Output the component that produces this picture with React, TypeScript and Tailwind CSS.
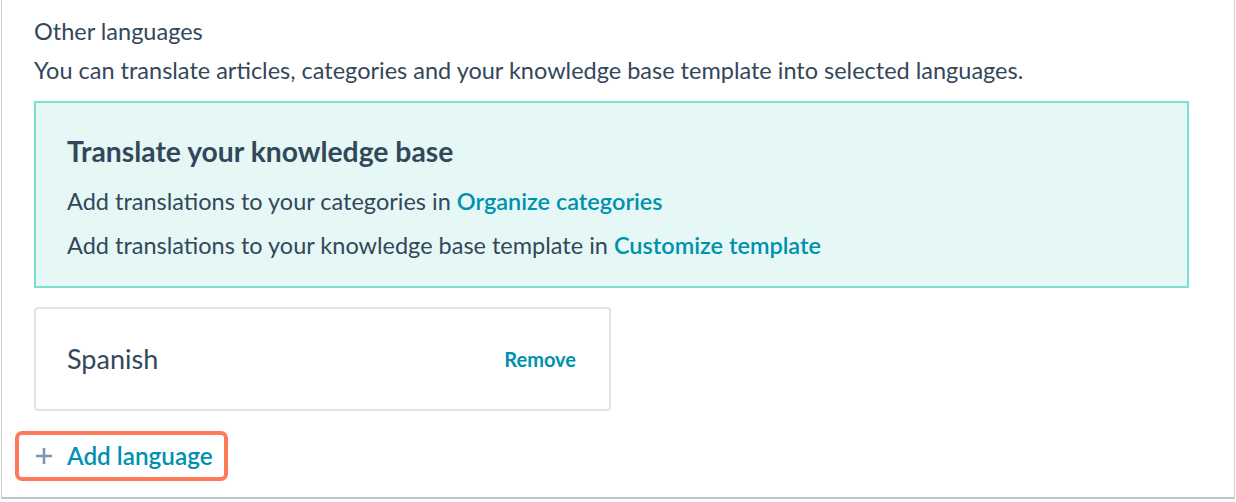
import React from "react";

const font = { fontFamily: "Lato, 'Noto Sans', sans-serif" };

function PlusIcon() {
  return (
    <svg width="18" height="18" viewBox="0 0 18 18" aria-hidden="true">
      <path d="M9 1v16M1 9h16" stroke="#7c98b6" strokeWidth="2.6" />
    </svg>
  );
}

export default function App() {
  return (
    <div className="h-[502px] w-[1236px] bg-white pl-[1px]" style={font}>
      <div className="h-[499px] w-[1234px] border-x border-b-2 border-x-[#cfcfcf] border-b-[#c4c4c4] pl-[32px] pt-[17px] text-[#33475b]">
        <div className="text-[23.5px] leading-[28px]">Other languages</div>
        <p className="mt-[11px] text-[23.5px] leading-[28px]">
          You can translate articles, categories and your knowledge base template into selected languages.
        </p>

        <div className="mt-[17px] h-[187px] w-[1155px] border-2 border-[#7fded2] bg-[#e5f8f6] pl-[31px] pt-[31px]">
          <h3 className="text-[28.3px] font-bold leading-[34px]">Translate your knowledge base</h3>
          <p className="mt-[19px] text-[23.5px] leading-[28px]">
            Add translations to your categories in{" "}
            <a className="font-semibold text-[#0091ae]">Organize categories</a>
          </p>
          <p className="mt-[16px] text-[23.5px] leading-[28px]">
            Add translations to your knowledge base template in{" "}
            <a className="font-semibold text-[#0091ae]">Customize template</a>
          </p>
        </div>

        <div className="mt-[19px] flex h-[104px] w-[577px] items-center justify-between rounded-[4px] border-2 border-[#dfe3eb] pl-[31px] pr-[33px]">
          <span className="text-[27px] leading-[32px]">Spanish</span>
          <a className="text-[20px] font-bold leading-[24px] text-[#0091ae]">Remove</a>
        </div>

        <div className="-ml-[19px] mt-[20px] inline-flex h-[50px] items-center gap-[14px] rounded-[7px] border-4 border-[#ff7a59] pl-[16px] pr-[11px]">
          <PlusIcon />
          <span className="text-[24.3px] font-semibold leading-[30px] text-[#0091ae]">Add language</span>
        </div>
      </div>
    </div>
  );
}
